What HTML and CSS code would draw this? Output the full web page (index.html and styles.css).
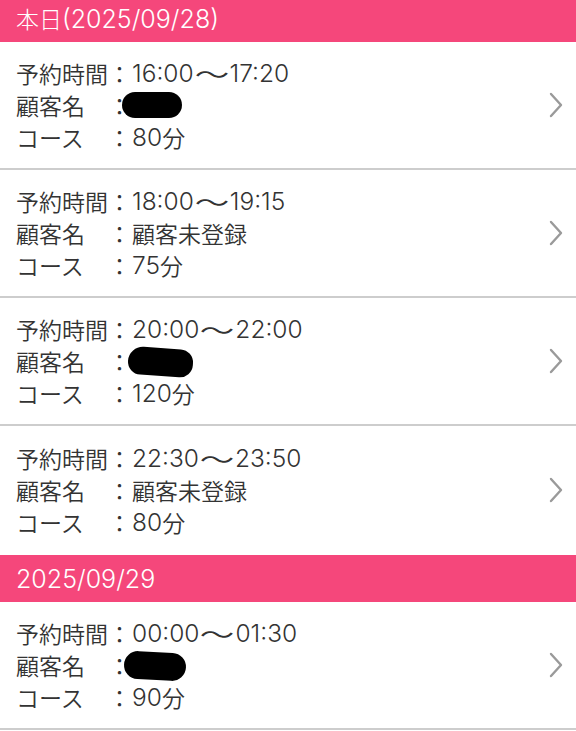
FILE: index.html
```html
<!DOCTYPE html>
<html lang="ja">
<head>
<meta charset="utf-8">
<link rel="stylesheet" href="styles.css">
</head>
<body>
<div class="page">
  <div class="day-head first">本日<span class="num">(2025/09/28)</span></div>
  <div class="item">
    <div class="info">
      <div class="line"><span class="lbl">予約時間</span><span class="colon">：</span><span class="num">16:00</span><span class="tilde">～</span><span class="num">17:20</span></div>
      <div class="line"><span class="lbl">顧客名</span><span class="colon">：</span><span class="redact r1"></span></div>
      <div class="line"><span class="lbl">コース</span><span class="colon">：</span><span class="num">80</span>分</div>
    </div>
    <svg class="chev" viewBox="0 0 16 26" width="16" height="26"><path d="M3 2 L13 13 L3 24" fill="none" stroke="#9a9a9a" stroke-width="2.4" stroke-linecap="round" stroke-linejoin="round"/></svg>
  </div>
  <div class="item">
    <div class="info">
      <div class="line"><span class="lbl">予約時間</span><span class="colon">：</span><span class="num">18:00</span><span class="tilde">～</span><span class="num">19:15</span></div>
      <div class="line"><span class="lbl">顧客名</span><span class="colon">：</span>顧客未登録</div>
      <div class="line"><span class="lbl">コース</span><span class="colon">：</span><span class="num">75</span>分</div>
    </div>
    <svg class="chev" viewBox="0 0 16 26" width="16" height="26"><path d="M3 2 L13 13 L3 24" fill="none" stroke="#9a9a9a" stroke-width="2.4" stroke-linecap="round" stroke-linejoin="round"/></svg>
  </div>
  <div class="item">
    <div class="info">
      <div class="line"><span class="lbl">予約時間</span><span class="colon">：</span><span class="num">20:00</span><span class="tilde">～</span><span class="num">22:00</span></div>
      <div class="line"><span class="lbl">顧客名</span><span class="colon">：</span><span class="redact r2"></span></div>
      <div class="line"><span class="lbl">コース</span><span class="colon">：</span><span class="num">120</span>分</div>
    </div>
    <svg class="chev" viewBox="0 0 16 26" width="16" height="26"><path d="M3 2 L13 13 L3 24" fill="none" stroke="#9a9a9a" stroke-width="2.4" stroke-linecap="round" stroke-linejoin="round"/></svg>
  </div>
  <div class="item last">
    <div class="info">
      <div class="line"><span class="lbl">予約時間</span><span class="colon">：</span><span class="num">22:30</span><span class="tilde">～</span><span class="num">23:50</span></div>
      <div class="line"><span class="lbl">顧客名</span><span class="colon">：</span>顧客未登録</div>
      <div class="line"><span class="lbl">コース</span><span class="colon">：</span><span class="num">80</span>分</div>
    </div>
    <svg class="chev" viewBox="0 0 16 26" width="16" height="26"><path d="M3 2 L13 13 L3 24" fill="none" stroke="#9a9a9a" stroke-width="2.4" stroke-linecap="round" stroke-linejoin="round"/></svg>
  </div>
  <div class="day-head"><span class="num">2025/09/29</span></div>
  <div class="item">
    <div class="info">
      <div class="line"><span class="lbl">予約時間</span><span class="colon">：</span><span class="num">00:00</span><span class="tilde">～</span><span class="num">01:30</span></div>
      <div class="line"><span class="lbl">顧客名</span><span class="colon">：</span><span class="redact r3"></span></div>
      <div class="line"><span class="lbl">コース</span><span class="colon">：</span><span class="num">90</span>分</div>
    </div>
    <svg class="chev" viewBox="0 0 16 26" width="16" height="26"><path d="M3 2 L13 13 L3 24" fill="none" stroke="#9a9a9a" stroke-width="2.4" stroke-linecap="round" stroke-linejoin="round"/></svg>
  </div>
</div>
</body>
</html>
```

FILE: styles.css
```css
html, body {
  margin: 0;
  padding: 0;
  background: #ffffff;
  overflow: hidden;
}
.page {
  font-family: "Noto Sans CJK JP", "Noto Sans", sans-serif;
  color: #333333;
  margin-top: -5px;
}
.day-head {
  height: 47px;
  box-sizing: border-box;
  background: #f5477b;
  color: #ffffff;
  font-size: 23px;
  line-height: 47px;
  padding-left: 16px;
  font-weight: 300;
  white-space: nowrap;
}
.day-head .num {
  font-size: 25px;
  font-weight: 300;
  color: #ffffff;
}
.item {
  height: 128px;
  box-sizing: border-box;
  border-bottom: 2px solid #cdcdcd;
  display: flex;
  align-items: center;
  justify-content: space-between;
  padding: 0 12px 0 16px;
}
.item.last {
  height: 129px;
  border-bottom: 0;
  padding-bottom: 1px;
}
.info {
  display: flex;
  flex-direction: column;
}
.line {
  font-size: 23px;
  line-height: 32px;
  height: 32px;
  white-space: nowrap;
  font-weight: 350;
  display: flex;
  align-items: center;
}
.lbl {
  width: 92px;
  display: inline-block;
}
.colon {
  width: 24px;
  display: inline-block;
}
.num {
  font-family: Inter, "Liberation Sans", sans-serif;
  font-size: 24.5px;
  font-weight: 300;
  color: #333333;
}
.tilde {
  display: inline-block;
  width: 36px;
  text-align: center;
  transform: scaleX(1.5);
}
.redact {
  display: inline-block;
  background: #000000;
  position: relative;
}
.r1 {
  width: 60px;
  height: 26px;
  border-radius: 13px;
  margin-left: -10px;
}
.r2 {
  width: 65px;
  height: 28px;
  border-radius: 16px 14px 14px 14px;
  margin-left: -4px;
  top: 1px;
  transform: rotate(4deg);
}
.r3 {
  width: 62px;
  height: 28px;
  border-radius: 15px;
  margin-left: -8px;
  top: 1px;
  transform: rotate(3deg);
}
.chev {
  display: block;
  flex: none;
}
```
